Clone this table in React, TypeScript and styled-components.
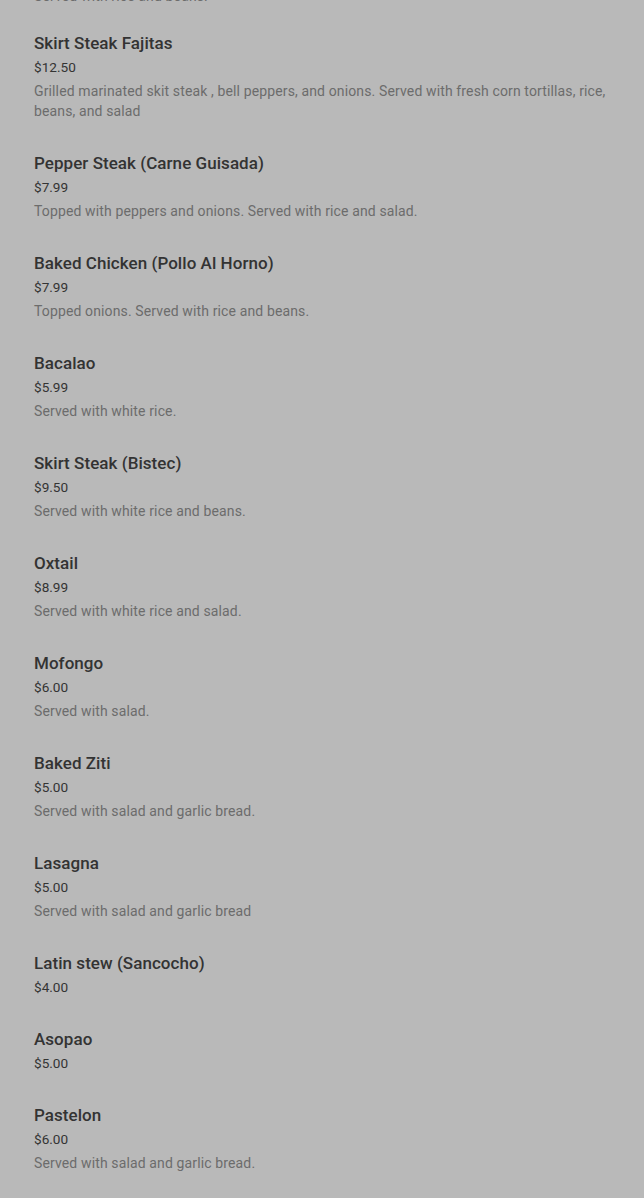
import React from "react";
import styled, { createGlobalStyle } from "styled-components";

const Global = createGlobalStyle`
  html, body { margin: 0; padding: 0; background: #b9b9b9; }
  body { font-family: Roboto, "Noto Sans", sans-serif; }
`;

const Page = styled.main`
  background: #b9b9b9;
  min-height: 1198px;
  padding: 0 34px 40px 34px;
  overflow: hidden;
  display: flex;
  flex-direction: column;
  gap: 28px;
`;

const Item = styled.section`
  display: flex;
  flex-direction: column;
`;

const Cut = styled.div`
  margin-top: -16px;
  margin-bottom: -5px;
`;

const Title = styled.h3`
  margin: 0;
  font-size: 17px;
  line-height: 24px;
  font-weight: 500;
  color: #333333;
  letter-spacing: 0.05px;
`;

const Price = styled.div`
  font-size: 13.6px;
  line-height: 24px;
  color: #343434;
`;

const Desc = styled.p`
  margin: 2px 0 2px 0;
  font-size: 14px;
  line-height: 20px;
  font-weight: 400;
  letter-spacing: 0.13px;
  color: #6c6c6c;
`;

type Dish = { name: string; price: string; desc?: string };

const dishes: Dish[] = [
  {
    name: "Skirt Steak Fajitas",
    price: "$12.50",
    desc: "Grilled marinated skit steak , bell peppers, and onions. Served with fresh corn tortillas, rice, beans, and salad",
  },
  { name: "Pepper Steak (Carne Guisada)", price: "$7.99", desc: "Topped with peppers and onions. Served with rice and salad." },
  { name: "Baked Chicken (Pollo Al Horno)", price: "$7.99", desc: "Topped onions. Served with rice and beans." },
  { name: "Bacalao", price: "$5.99", desc: "Served with white rice." },
  { name: "Skirt Steak (Bistec)", price: "$9.50", desc: "Served with white rice and beans." },
  { name: "Oxtail", price: "$8.99", desc: "Served with white rice and salad." },
  { name: "Mofongo", price: "$6.00", desc: "Served with salad." },
  { name: "Baked Ziti", price: "$5.00", desc: "Served with salad and garlic bread." },
  { name: "Lasagna", price: "$5.00", desc: "Served with salad and garlic bread" },
  { name: "Latin stew (Sancocho)", price: "$4.00" },
  { name: "Asopao", price: "$5.00" },
  { name: "Pastelon", price: "$6.00", desc: "Served with salad and garlic bread." },
];

export default function App() {
  return (
    <>
      <Global />
      <Page>
        <Cut>
          <Desc>Served with rice and beans.</Desc>
        </Cut>
        {dishes.map((d) => (
          <Item key={d.name}>
            <Title>{d.name}</Title>
            <Price>{d.price}</Price>
            {d.desc && <Desc>{d.desc}</Desc>}
          </Item>
        ))}
      </Page>
    </>
  );
}
